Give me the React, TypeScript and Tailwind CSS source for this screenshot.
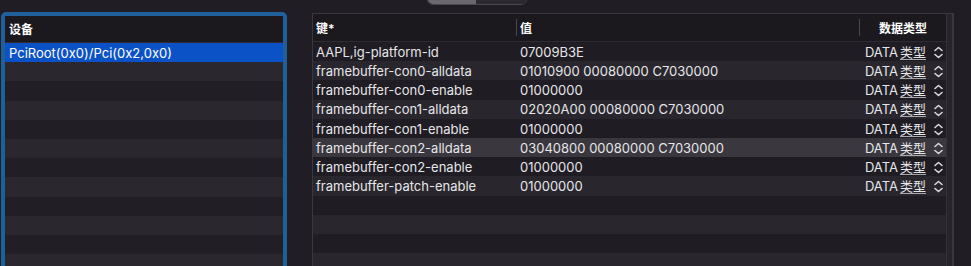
import React from "react";

const rows: [string, string][] = [
  ["AAPL,ig-platform-id", "07009B3E"],
  ["framebuffer-con0-alldata", "01010900 00080000 C7030000"],
  ["framebuffer-con0-enable", "01000000"],
  ["framebuffer-con1-alldata", "02020A00 00080000 C7030000"],
  ["framebuffer-con1-enable", "01000000"],
  ["framebuffer-con2-alldata", "03040800 00080000 C7030000"],
  ["framebuffer-con2-enable", "01000000"],
  ["framebuffer-patch-enable", "01000000"],
];

const Chevrons = () => (
  <svg width="11" height="13" viewBox="0 0 11 13" fill="none" stroke="#d8d8dc" strokeWidth="1.6" strokeLinecap="round" strokeLinejoin="round">
    <path d="M2 4.5 L5.5 1.5 L9 4.5" />
    <path d="M2 8.5 L5.5 11.5 L9 8.5" />
  </svg>
);

export default function App() {
  const leftRows = Array.from({ length: 12 });
  const rightRows = Array.from({ length: 12 });
  return (
    <div className="relative w-[971px] h-[266px] overflow-hidden bg-[#201d24] font-['Inter','Noto_Sans_CJK_SC',sans-serif] text-[13px] text-[#e6e6e9]">
      {/* segmented control peeking at top */}
      <div className="absolute left-[427px] top-[-18px] flex h-[23px] w-[100px] overflow-hidden rounded-[6px] border border-[#4a4750]">
        <div className="w-[48px] bg-[#6a686e]" />
        <div className="flex-1 bg-[#2c2930]" />
      </div>

      <div className="flex pt-[12px] h-full">
        {/* left panel */}
        <div className="ml-[1px] w-[286px] h-[270px] border-4 border-[#1f5f9a] rounded-[5px] overflow-hidden bg-[#211e25] flex flex-col">
          <div className="h-[27px] shrink-0 flex items-center pt-[2px] pl-[4px] bg-[#1b191e] border-b border-[#2e2b33] text-[12px] font-semibold text-white">
            设备
          </div>
          <div className="flex flex-col">
            {leftRows.map((_, i) => (
              <div
                key={i}
                className={
                  "h-[19.2px] shrink-0 flex items-center pt-[2px] pl-[4px] " +
                  (i === 0 ? "bg-[#0c52c7] text-white" : i % 2 === 1 ? "bg-[#2a272e]" : "bg-[#211e25]")
                }
              >
                {i === 0 ? "PciRoot(0x0)/Pci(0x2,0x0)" : ""}
              </div>
            ))}
          </div>
        </div>

        {/* right panel */}
        <div className="ml-[25px] mt-[1px] w-[642px] h-[270px] flex border-l border-t border-r-2 border-[#3a3740]">
          <div className="flex-1 flex flex-col overflow-hidden">
            <div className="h-[28px] shrink-0 flex items-center bg-[#1b191e] border-b border-[#2e2b33] text-[12px] font-semibold text-white">
              <div className="w-[203px] pl-[3px] pt-[3px]">键*</div>
              <div className="w-[343px] h-full flex items-center">
                <div className="w-px h-[17px] bg-[#4a4750]" />
                <span className="pl-[3px] pt-[3px]">值</span>
              </div>
              <div className="flex-1 h-full flex items-center">
                <div className="w-px h-[17px] bg-[#4a4750]" />
                <span className="flex-1 text-center pt-[3px]">数据类型</span>
              </div>
            </div>
            {rightRows.map((_, i) => {
              const r = rows[i];
              const bg = i === 5 ? "bg-[#3a383e]" : i % 2 === 1 ? "bg-[#29262d]" : "bg-[#1f1c23]";
              return (
                <div key={i} className={"h-[19.2px] shrink-0 flex items-center pt-[2px] " + bg}>
                  {r && (
                    <>
                      <div className="w-[203px] pl-[3px] whitespace-nowrap">{r[0]}</div>
                      <div className="w-[343px] pl-[4px] whitespace-nowrap">{r[1]}</div>
                      <div className="flex-1 flex items-center justify-end pr-[2px] gap-[7px]">
                        <span className="whitespace-nowrap">
                          DATA
                          <span className="ml-[2px] underline decoration-[#a9a9ae] underline-offset-[2px]">类型</span>
                        </span>
                        <Chevrons />
                      </div>
                    </>
                  )}
                </div>
              );
            })}
          </div>
          <div className="w-[6px] shrink-0 bg-[#27242b] border-l border-[#35323a]" />
        </div>
      </div>
    </div>
  );
}
